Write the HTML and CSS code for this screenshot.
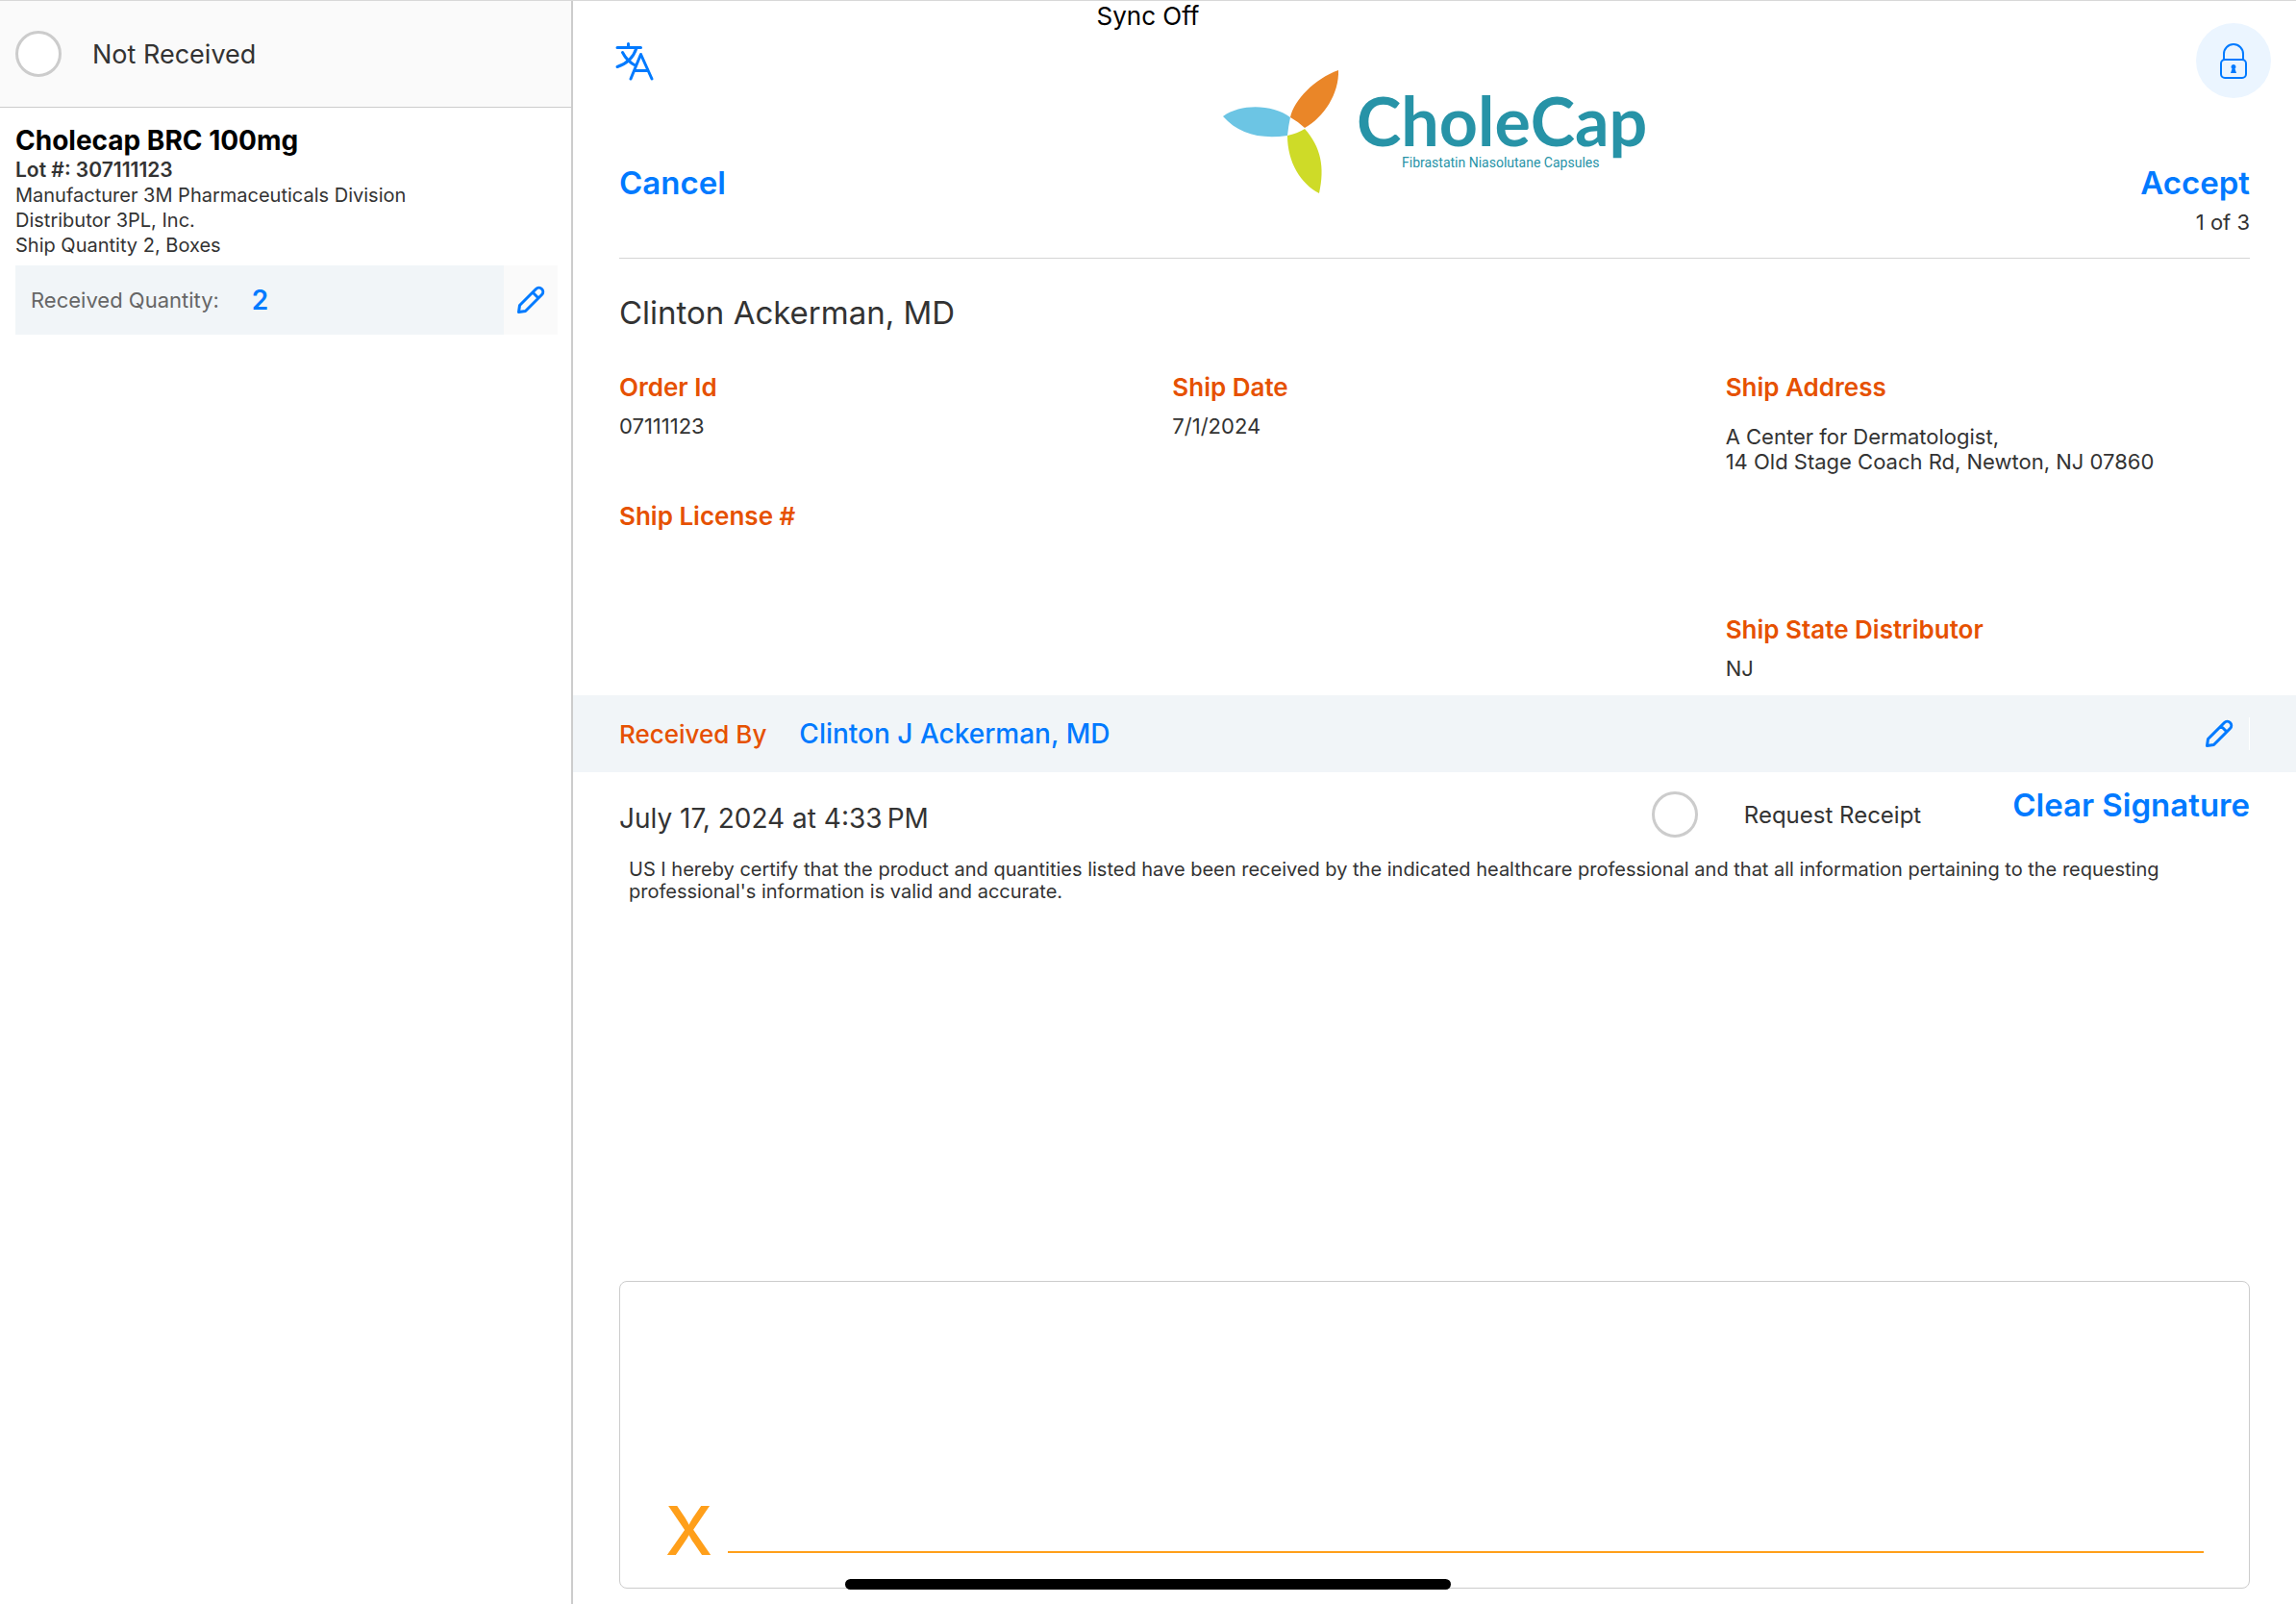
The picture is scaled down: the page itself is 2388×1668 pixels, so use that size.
FILE: index.html
```html
<!DOCTYPE html>
<html lang="en">
	<head>
		<meta charset="UTF-8" />
		<meta name="viewport" content="width=device-width, initial-scale=1.0" />
		<title>Sample Receipt</title>
		<link rel="stylesheet" href="styles.css">
	</head>
	<body>
	<div class="status">Sync Off</div>

	<div class="page">
		<aside class="sidebar">
			<label class="not-received">
				<input type="checkbox" class="round-check" />
				Not Received
			</label>
			<div class="product">
				<h2 class="product-name">Cholecap BRC 100mg</h2>
				<p class="lot">Lot #: 307111123</p>
				<p>Manufacturer 3M Pharmaceuticals Division</p>
				<p>Distributor 3PL, Inc.</p>
				<p>Ship Quantity 2, Boxes</p>
				<div class="quantity">
					<div class="quantity-value">
						<span>Received Quantity:</span>
						<strong>2</strong>
					</div>
					<button class="quantity-edit" aria-label="Edit quantity">
						<svg class="pencil" viewBox="0 0 30 30"><path d="M2.500 27.500l1-7L20.500 3.500a4.200 4.200 0 0 1 6 6L9.500 26.500zM17 7l6 6"/></svg>
					</button>
				</div>
			</div>
		</aside>

		<main class="main">
			<header class="header">
				<div class="header-left">
					<button class="language" aria-label="Language">
						<svg viewBox="0 0 40 40"><path d="M2 5.500h24.500M13.500 1.500v4M7.500 10.500c3 6 8 11 14 14M22 6c-3 9-9 16-20 19.500M16 38L26.500 12.500 38 38M19.500 29.500h14.500"/></svg>
					</button>
					<button class="action">Cancel</button>
				</div>
				<svg class="logo" viewBox="0 0 440 136" role="img" aria-label="CholeCap">
					<path fill="#6cc5e4" d="M0 47c20-14 52-12 70 1q-2 9-3 19C38 71 16 65 0 47z"/>
					<path fill="#ea8628" d="M120-1C95 8 74 30 70 48q9 5 15 11c20-11 36-36 35-60z"/>
					<path fill="#cedb28" d="M85 60q-8 5-18 7c0 28 14 50 33 60 6-27 2-48-15-67z"/>
					<text class="logo-name" x="139" y="78">CholeCap</text>
					<text class="logo-tag" x="186" y="100">Fibrastatin Niasolutane Capsules</text>
				</svg>
				<div class="header-right">
					<button class="lock" aria-label="Lock">
						<svg viewBox="0 0 30 40"><rect x="2" y="19" width="26" height="19" rx="4"/><path d="M5 19v-6a10 10 0 0 1 20 0v6"/><path class="keyhole" d="M15 24a2.500 2.500 0 0 1 1.500 4.500L18 33h-6l1.500-4.500A2.500 2.500 0 0 1 15 24z"/></svg>
					</button>
					<button class="action">Accept</button>
					<span class="step">1 of 3</span>
				</div>
			</header>

			<section class="order">
				<h1 class="doctor">Clinton Ackerman, MD</h1>
				<dl class="fields">
					<div>
						<dt>Order Id</dt>
						<dd>07111123</dd>
					</div>
					<div>
						<dt>Ship Date</dt>
						<dd>7/1/2024</dd>
					</div>
					<div class="address">
						<dt>Ship Address</dt>
						<dd>A Center for Dermatologist,<br>14 Old Stage Coach Rd, Newton, NJ 07860</dd>
					</div>
					<div class="license">
						<dt>Ship License #</dt>
					</div>
					<div class="distributor">
						<dt>Ship State Distributor</dt>
						<dd>NJ</dd>
					</div>
				</dl>
			</section>

			<div class="received-by">
				<span class="received-label">Received By</span>
				<strong class="received-name">Clinton J Ackerman, MD</strong>
				<button class="received-edit" aria-label="Edit received by">
					<svg class="pencil" viewBox="0 0 30 30"><path d="M2.500 27.500l1-7L20.500 3.500a4.200 4.200 0 0 1 6 6L9.500 26.500zM17 7l6 6"/></svg>
				</button>
			</div>

			<section class="sign">
				<div class="sign-row">
					<time class="date" datetime="2024-07-17T16:33">July 17, 2024 at 4:33&#8239;PM</time>
					<label class="receipt">
						<input type="checkbox" class="round-check" />
						Request Receipt
					</label>
					<button class="action">Clear Signature</button>
				</div>
				<p class="certify">US I hereby certify that the product and quantities listed have been received by the indicated healthcare professional and that all information pertaining to the requesting professional's information is valid and accurate.</p>
				<div class="signature">
					<span class="signature-x">X</span>
					<span class="signature-line"></span>
				</div>
			</section>
		</main>
	</div>

	<div class="home-bar"></div>
	</body>
</html>
```
FILE: styles.css
```css
* {
	box-sizing: border-box;
}

body {
	margin: 0;
	font-family: Inter, "Liberation Sans", sans-serif;
	font-size: 20px;
	color: #333;
	background: #fff;
}

h1, h2, p, dl, dd {
	margin: 0;
}

button {
	padding: 0;
	border: 0;
	background: none;
	color: #007aff;
	font-family: inherit;
}

svg {
	display: block;
	fill: none;
	stroke-linecap: round;
	stroke-linejoin: round;
}

.status {
	position: absolute;
	top: 0;
	left: 0;
	right: 0;
	line-height: 34px;
	text-align: center;
	font-size: 26px;
	color: #000;
}

.page {
	display: grid;
	grid-template-columns: 596px 1fr;
	min-height: 100vh;
	border-top: 1px solid #d8d8d8;
}

/* left list */

.sidebar {
	border-right: 2px solid #ccc;
}

.not-received {
	display: flex;
	align-items: center;
	gap: 32px;
	height: 111px;
	padding: 0 16px;
	border-bottom: 1px solid #ccc;
	background: #fafafa;
	font-size: 27px;
}

.round-check {
	appearance: none;
	flex: none;
	width: 48px;
	height: 48px;
	margin: 0;
	border: 3px solid #ccc;
	border-radius: 50%;
	background: #fff;
}

.product {
	padding: 16px 14px 0 16px;
	line-height: 26px;
}

.product-name {
	line-height: 36px;
	font-size: 28px;
	color: #000;
}

.lot {
	font-size: 21px;
	font-weight: 600;
}

.quantity {
	display: flex;
	height: 72px;
	margin-top: 8px;
	background: #f1f5f8;
}

.quantity-value {
	flex: 1;
	display: flex;
	align-items: center;
	gap: 34px;
	padding-left: 16px;
	font-size: 22px;
	color: #666;
}

.quantity-value strong {
	font-size: 28px;
	font-weight: 600;
	color: #007aff;
}

.quantity-edit {
	width: 56px;
	background: #fafafa;
}

.pencil {
	width: 30px;
	height: 30px;
	margin: auto;
	stroke: #007aff;
	stroke-width: 3;
}

/* right side */

.main {
	display: flex;
	flex-direction: column;
	min-width: 0;
}

.header {
	display: grid;
	grid-template-columns: 1fr 440px 1fr;
	padding: 23px 26px 18px;
}

.header-left,
.header-right {
	display: flex;
	flex-direction: column;
	align-items: flex-start;
	padding: 0 22px;
}

.header-right {
	align-items: flex-end;
}

.action {
	line-height: 44px;
	font-size: 33px;
	font-weight: 600;
}

.language {
	margin: 20px 0 84px -4px;
}

.language svg {
	width: 40px;
	height: 40px;
	stroke: #007aff;
	stroke-width: 3;
}

.lock {
	width: 78px;
	height: 78px;
	margin: 0 -22px 66px 0;
	border-radius: 50%;
	background: #ebf5ff;
}

.lock svg {
	width: 30px;
	height: 40px;
	margin: auto;
	stroke: #007aff;
	stroke-width: 2;
}

.lock .keyhole {
	fill: #007aff;
	stroke: none;
}

.step {
	line-height: 38px;
	font-size: 22px;
}

.logo {
	width: 440px;
	height: 136px;
	margin-top: 50px;
	overflow: visible;
}

.logo-name {
	font-family: Lato, sans-serif;
	font-size: 70px;
	font-weight: 700;
	fill: #2793a7;
}

.logo-tag {
	font-family: Roboto, sans-serif;
	font-size: 14px;
	fill: #2793a7;
}

.order {
	margin: 0 48px;
	padding-top: 34px;
	border-top: 1px solid #d4d4d4;
}

.doctor {
	line-height: 44px;
	font-size: 33px;
	font-weight: 400;
}

.fields {
	display: grid;
	grid-template-columns: 1fr 1fr 1fr;
	grid-template-rows: 134px 118px auto;
	column-gap: 30px;
	padding: 36px 0 8px;
}

dt {
	line-height: 40px;
	font-size: 26px;
	font-weight: 600;
	color: #e65100;
}

dd {
	line-height: 40px;
	font-size: 22px;
}

.address dd {
	padding-top: 18px;
	line-height: 26px;
}

.license {
	grid-row: 2;
}

.distributor {
	grid-area: 3 / 3;
}

.received-by {
	display: flex;
	align-items: center;
	height: 80px;
	padding: 0 48px;
	background: #f1f5f8;
}

.received-label {
	margin-right: 34px;
	font-size: 26px;
	font-weight: 500;
	color: #e65100;
}

.received-name {
	flex: 1;
	font-size: 28px;
	font-weight: 500;
	color: #007aff;
}

.received-edit {
	padding: 2px 16px;
	border-right: 1px solid #fff;
}

.sign {
	flex: 1;
	display: flex;
	flex-direction: column;
	padding: 12px 48px 16px;
}

.sign-row {
	display: flex;
	align-items: flex-start;
}

.date {
	flex: 1;
	line-height: 72px;
	font-size: 28px;
}

.receipt {
	display: flex;
	align-items: center;
	gap: 48px;
	margin: 8px 95px 0 0;
	font-size: 24px;
}

.certify {
	padding: 6px 10px;
	line-height: 23px;
}

.signature {
	display: flex;
	align-items: flex-end;
	gap: 16px;
	height: 320px;
	margin-top: auto;
	padding: 0 47px 36px;
	border: 1px solid #ccc;
	border-radius: 8px;
}

.signature-x {
	line-height: 46px;
	font-size: 70px;
	font-weight: 500;
	color: #ff9f1a;
}

.signature-line {
	flex: 1;
	height: 2px;
	background: #ff9f1a;
}

/* home indicator, floats over the page */
.home-bar {
	position: absolute;
	bottom: 15px;
	left: 50%;
	width: 630px;
	height: 11px;
	margin-left: -315px;
	border-radius: 6px;
	background: #000;
}
```
